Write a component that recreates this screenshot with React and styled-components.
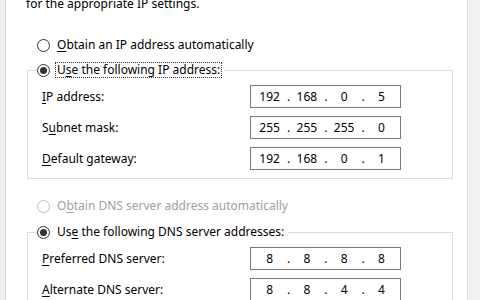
import React from 'react';
import styled, { createGlobalStyle } from 'styled-components';

const GlobalStyle = createGlobalStyle`
  html, body {
    margin: 0;
    padding: 0;
    background: #ffffff;
    overflow: hidden;
  }
  body {
    font-family: "Noto Sans", "Open Sans", sans-serif;
    font-size: 12px;
    color: #000;
  }
`;

const Window = styled.div`
  display: flex;
  width: 480px;
  height: 300px;
  overflow: hidden;
`;

const Edge = styled.div`
  flex: 0 0 ${p => p.w}px;
  background: #f0f0f0;
  border-${p => p.side}: 1px solid #dadada;
`;

const Panel = styled.div`
  flex: 1;
  background: #fff;
  padding: 0 14px 0 21px;
`;

const Intro = styled.div`
  margin: -4px 0 0 -1px;
  line-height: 16px;
  white-space: nowrap;
`;

const OptionRow = styled.div`
  display: flex;
  align-items: center;
  height: 16px;
  margin: ${p => p.mt || 0}px 0 0 10px;
  color: ${p => (p.disabled ? '#a0a0a0' : '#000')};
  white-space: nowrap;
`;

const Circle = styled.span`
  box-sizing: border-box;
  width: 13px;
  height: 13px;
  border-radius: 50%;
  border: 1px solid ${p => (p.disabled ? '#bcbcbc' : '#333')};
  background: #fff;
  display: flex;
  align-items: center;
  justify-content: center;
  margin-right: 5px;
  flex: 0 0 auto;

  &::after {
    content: '';
    display: ${p => (p.checked ? 'block' : 'none')};
    width: 7px;
    height: 7px;
    border-radius: 50%;
    background: #333;
  }
`;

const Caption = styled.span`
  padding: 0 1px;
  line-height: 14px;
  border: 1px dotted ${p => (p.focused ? '#333' : 'transparent')};
`;

const Key = styled.u`
  text-decoration-thickness: 1px;
  text-underline-offset: 2px;
`;

const Group = styled.fieldset`
  margin: ${p => p.mt || 0}px 0 0 0;
  padding: 7px 51px 8px 14px;
  border: 1px solid #dcdcdc;
  min-width: 0;
  display: flex;
  flex-direction: column;
  gap: 8px;
`;

const Legend = styled.legend`
  padding: 0 2px 0 0;
  margin-left: -5px;
`;

const LegendRow = styled(OptionRow)`
  margin: 0;
`;

const Field = styled.div`
  display: flex;
  align-items: center;
  justify-content: space-between;
  height: 23px;
  white-space: nowrap;
`;

const IpBox = styled.div`
  box-sizing: border-box;
  width: 151px;
  height: 23px;
  border: 1px solid #7a7a7a;
  display: grid;
  grid-template-columns: repeat(4, 1fr);
  align-items: center;
`;

const Octet = styled.span`
  position: relative;
  text-align: center;
  line-height: 21px;

  &:not(:last-child)::after {
    content: '.';
    position: absolute;
    right: -2px;
    top: 0;
  }
`;

function Radio({ checked, disabled, focused, label, k, mt, legend }) {
  const i = label.indexOf(k);
  const Row = legend ? LegendRow : OptionRow;
  return (
    <Row mt={mt} disabled={disabled}>
      <Circle checked={checked} disabled={disabled} />
      <Caption focused={focused}>
        {label.slice(0, i)}
        <Key>{k}</Key>
        {label.slice(i + 1)}
      </Caption>
    </Row>
  );
}

function IpField({ label, k, value }) {
  const i = label.indexOf(k);
  return (
    <Field>
      <span>
        {label.slice(0, i)}
        <Key>{k}</Key>
        {label.slice(i + 1)}
      </span>
      <IpBox>
        {value.split('.').map((o, n) => (
          <Octet key={n}>{o}</Octet>
        ))}
      </IpBox>
    </Field>
  );
}

export default function App() {
  return (
    <Window>
      <GlobalStyle />
      <Edge w={5} side="right" />
      <Panel>
        <Intro>for the appropriate IP settings.</Intro>

        <Radio mt={25} label="Obtain an IP address automatically" k="O" />
        <Group mt={9}>
          <Legend>
            <Radio legend checked focused label="Use the following IP address:" k="s" />
          </Legend>
          <IpField label="IP address:" k="I" value="192.168.0.5" />
          <IpField label="Subnet mask:" k="u" value="255.255.255.0" />
          <IpField label="Default gateway:" k="D" value="192.168.0.1" />
        </Group>

        <Radio mt={19} disabled label="Obtain DNS server address automatically" k="b" />
        <Group mt={10}>
          <Legend>
            <Radio legend checked label="Use the following DNS server addresses:" k="e" />
          </Legend>
          <IpField label="Preferred DNS server:" k="P" value="8.8.8.8" />
          <IpField label="Alternate DNS server:" k="A" value="8.8.4.4" />
        </Group>
      </Panel>
      <Edge w={12} side="left" />
    </Window>
  );
}
